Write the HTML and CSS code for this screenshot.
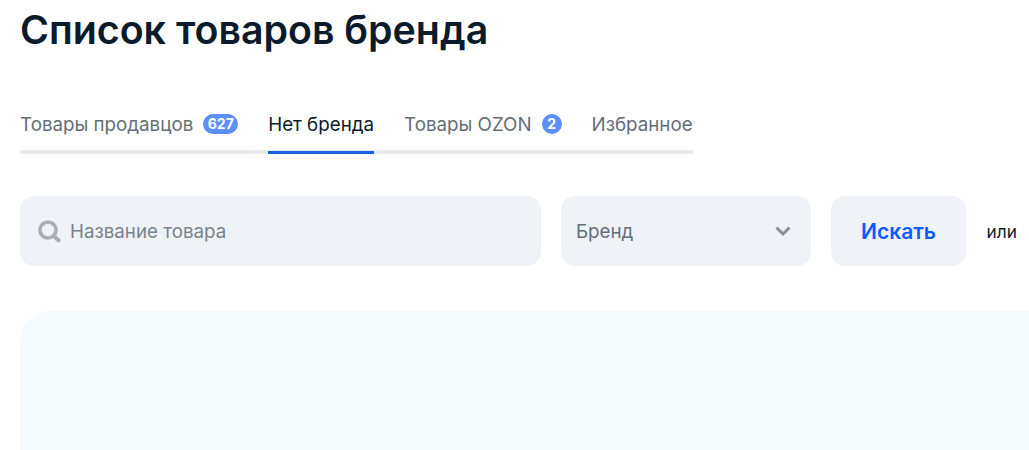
FILE: index.html
```html
<!DOCTYPE html>
<html lang="ru">
<head>
<meta charset="utf-8">
<title>Список товаров бренда</title>
<link rel="stylesheet" href="styles.css">
</head>
<body>
<main class="page">
  <h1 class="title">Список товаров бренда</h1>
  <nav class="tabs">
    <a class="tab">Товары продавцов <span class="badge">627</span></a>
    <a class="tab tab-active">Нет бренда</a>
    <a class="tab">Товары OZON <span class="badge badge-round">2</span></a>
    <a class="tab">Избранное</a>
  </nav>
  <form class="filters">
    <div class="field field-search">
      <svg class="search-icon" width="24" height="24" viewBox="0 0 24 24" fill="none" stroke="#a9afb7"><circle cx="11" cy="11" r="8" stroke-width="3.6"/><path d="M16.8 16.8L21.5 21.5" stroke-width="4" stroke-linecap="round"/></svg>
      <span class="placeholder">Название товара</span>
    </div>
    <div class="field field-brand">
      <span class="brand-label">Бренд</span>
      <svg class="chevron" width="16" height="10" viewBox="0 0 16 10" fill="none" stroke="#8a9097" stroke-width="3"><path d="M1.5 1.5L8 8l6.5-6.5"/></svg>
    </div>
    <button class="search-btn" type="button">Искать</button>
    <span class="or">или</span>
  </form>
  <section class="panel"></section>
</main>
</body>
</html>
```
FILE: styles.css
```css
html, body { margin: 0; padding: 0; height: 100%; overflow: hidden; background: #fff; }
body { font-family: Inter, "Noto Sans", sans-serif; }
.page { padding-left: 20px; height: 450px; overflow: hidden; }
.title { margin: 0; padding-top: 8px; font-size: 39.3px; line-height: 44px; font-weight: 600; color: #0b1b2b; height: 52px; }
.tabs { display: inline-flex; gap: 30px; margin-top: 52px; border-bottom: 4px solid #e8eaed; height: 38px; box-sizing: content-box; vertical-align: top; }
.tab { display: flex; align-items: center; gap: 10px; height: 42px; margin-bottom: -4px; box-sizing: border-box; padding-bottom: 18px; font-size: 18.75px; color: #666e77; white-space: nowrap; }
.tab-active { color: #0b1b2b; border-bottom: 3px solid #1a5fe0; padding-bottom: 15px; }
.badge { display: block; min-width: 35px; height: 20px; box-sizing: border-box; padding: 0 4px; border-radius: 10px; background: #5b8ffb; color: #fff; font-size: 14px; font-weight: 700; line-height: 20px; text-align: center; }
.badge-round { min-width: 20px; width: 20px; padding: 0; }
.filters { display: flex; align-items: center; margin-top: 42px; height: 70px; }
.field { height: 70px; box-sizing: border-box; background: #eff2f7; border-radius: 14px; display: flex; align-items: center; font-size: 18.75px; }
.field-search { width: 521px; padding-left: 18px; gap: 8px; }
.search-icon { margin-left: -1px; margin-right: 1px; }
.placeholder { color: #7a828b; }
.field-brand { width: 250px; margin-left: 20px; padding: 0 20px 0 15px; justify-content: space-between; }
.brand-label { color: #666e77; }
.search-btn { width: 135px; height: 70px; margin-left: 20px; border: 0; border-radius: 14px; background: #eff2f7; color: #0f5bff; font: 600 21px Inter, sans-serif; }
.or { margin-left: 20.5px; font-size: 17.3px; color: #0b1b2b; }
.panel { margin-top: 45px; height: 200px; background: #f5faff; border-radius: 30px 0 0 0; }
```
